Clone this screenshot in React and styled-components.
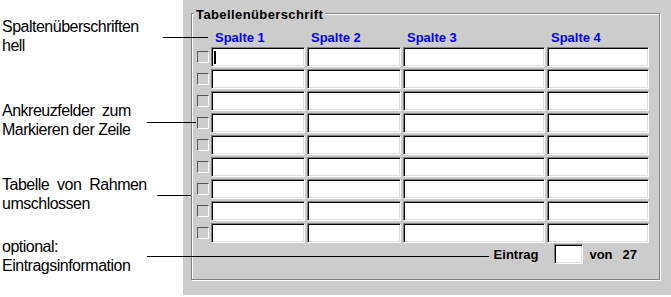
import React from "react";
import styled, { createGlobalStyle } from "styled-components";

const GlobalStyle = createGlobalStyle`
  html, body { margin: 0; padding: 0; background: #fff; }
  body { font-family: "Liberation Sans", Arial, sans-serif; }
`;

const notes = [
  { lines: ["Spaltenüberschriften", "hell"], mt: 0 },
  { lines: ["Ankreuzfelder  zum", "Markieren der Zeile"], mt: 46 },
  { lines: ["Tabelle  von  Rahmen", "umschlossen"], mt: 36 },
  { lines: ["optional:", "Eintragsinformation"], mt: 24 },
];

const leaders = [
  { x: 163, y: 37, w: 45 },
  { x: 147, y: 122, w: 49 },
  { x: 157, y: 195, w: 34 },
  { x: 147, y: 256, w: 342 },
];

const columns = ["Spalte 1", "Spalte 2", "Spalte 3", "Spalte 4"];
const rows = Array.from({ length: 9 }, (_, i) => i);

export default function App() {
  return (
    <>
      <GlobalStyle />
      <Page>
        <Notes>
          {notes.map((n, i) => (
            <Note key={i} $mt={n.mt}>
              {n.lines.map((l) => (
                <div key={l}>{l}</div>
              ))}
            </Note>
          ))}
        </Notes>

        <Panel>
          <GroupBox>
            <Legend>Tabellenüberschrift</Legend>
            <Grid>
              <span />
              {columns.map((c) => (
                <ColHead key={c}>{c}</ColHead>
              ))}
              {rows.map((r) => (
                <React.Fragment key={r}>
                  <CheckBox />
                  {columns.map((c, ci) => (
                    <Cell key={c}>{r === 0 && ci === 0 && <Caret />}</Cell>
                  ))}
                </React.Fragment>
              ))}
            </Grid>
            <Footer>
              <Label>Eintrag</Label>
              <SmallField />
              <Label $ml={6}>von</Label>
              <Label $ml={10}>27</Label>
            </Footer>
          </GroupBox>
        </Panel>

        {leaders.map((l, i) => (
          <Leader key={i} $x={l.x} $y={l.y} $w={l.w} />
        ))}
      </Page>
    </>
  );
}

const Page = styled.div`
  position: relative;
  display: flex;
  width: 671px;
  height: 297px;
  overflow: hidden;
`;

const Notes = styled.div`
  width: 183px;
  flex: none;
  padding: 17px 0 0 2px;
  box-sizing: border-box;
  display: flex;
  flex-direction: column;
`;

const Note = styled.div`
  margin-top: ${({ $mt }) => $mt}px;
  font-size: 16px;
  line-height: 19px;
  letter-spacing: -0.5px;
  color: #000;
  white-space: pre;
`;

const Panel = styled.div`
  flex: 1;
  height: 295px;
  background: #cccccc;
  padding: 5px 11px 0 8px;
  box-sizing: border-box;
`;

const GroupBox = styled.fieldset`
  margin: 0;
  width: 469px;
  box-sizing: border-box;
  border: 1px solid #808080;
  box-shadow: inset 1px 1px 0 #fff, 1px 1px 0 #fff;
  padding: 8px 10px 15px 5px;
  min-width: 0;
`;

const Legend = styled.legend`
  margin-left: -3px;
  padding: 2px 2px 0 2px;
  font-size: 13px;
  line-height: 15px;
  font-weight: bold;
  letter-spacing: 0.4px;
  color: #000;
  background: #cccccc;
`;

const Grid = styled.div`
  display: grid;
  grid-template-columns: 12px 94px 94px 142px 102px;
  grid-template-rows: 15px;
  grid-auto-rows: 20px;
  column-gap: 2px;
  row-gap: 2px;
  align-items: center;
`;

const ColHead = styled.div`
  align-self: start;
  padding-left: 4px;
  font-size: 13px;
  line-height: 15px;
  font-weight: bold;
  color: #0000ff;
  margin-bottom: 2px;
`;

const CheckBox = styled.div`
  width: 12px;
  height: 12px;
  box-sizing: border-box;
  border: 1px solid;
  border-color: #555 #fff #fff #555;
  background: #cccccc;
`;

const Cell = styled.div`
  height: 20px;
  box-sizing: border-box;
  background: #fff;
  border: 1px solid;
  border-color: #808080 #fff #fff #808080;
  box-shadow: inset 1px 1px 0 #000, inset -1px -1px 0 #dfdfdf;
  display: flex;
  align-items: center;
  padding-left: 2px;
`;

const Caret = styled.span`
  width: 2px;
  height: 13px;
  background: #000;
`;

const Footer = styled.div`
  display: flex;
  justify-content: flex-end;
  align-items: center;
  margin-top: 1px;
  padding-right: 12px;
`;

const Label = styled.span`
  margin-left: ${({ $ml }) => $ml || 0}px;
  font-size: 13px;
  line-height: 15px;
  font-weight: bold;
  color: #000;
`;

const SmallField = styled.div`
  width: 29px;
  height: 20px;
  margin-left: 16px;
  box-sizing: border-box;
  background: #fff;
  border: 1px solid;
  border-color: #808080 #fff #fff #808080;
  box-shadow: inset 1px 1px 0 #000, inset -1px -1px 0 #dfdfdf;
`;

const Leader = styled.div`
  position: absolute;
  left: ${({ $x }) => $x}px;
  top: ${({ $y }) => $y}px;
  width: ${({ $w }) => $w}px;
  height: 1px;
  background: #000;
`;
